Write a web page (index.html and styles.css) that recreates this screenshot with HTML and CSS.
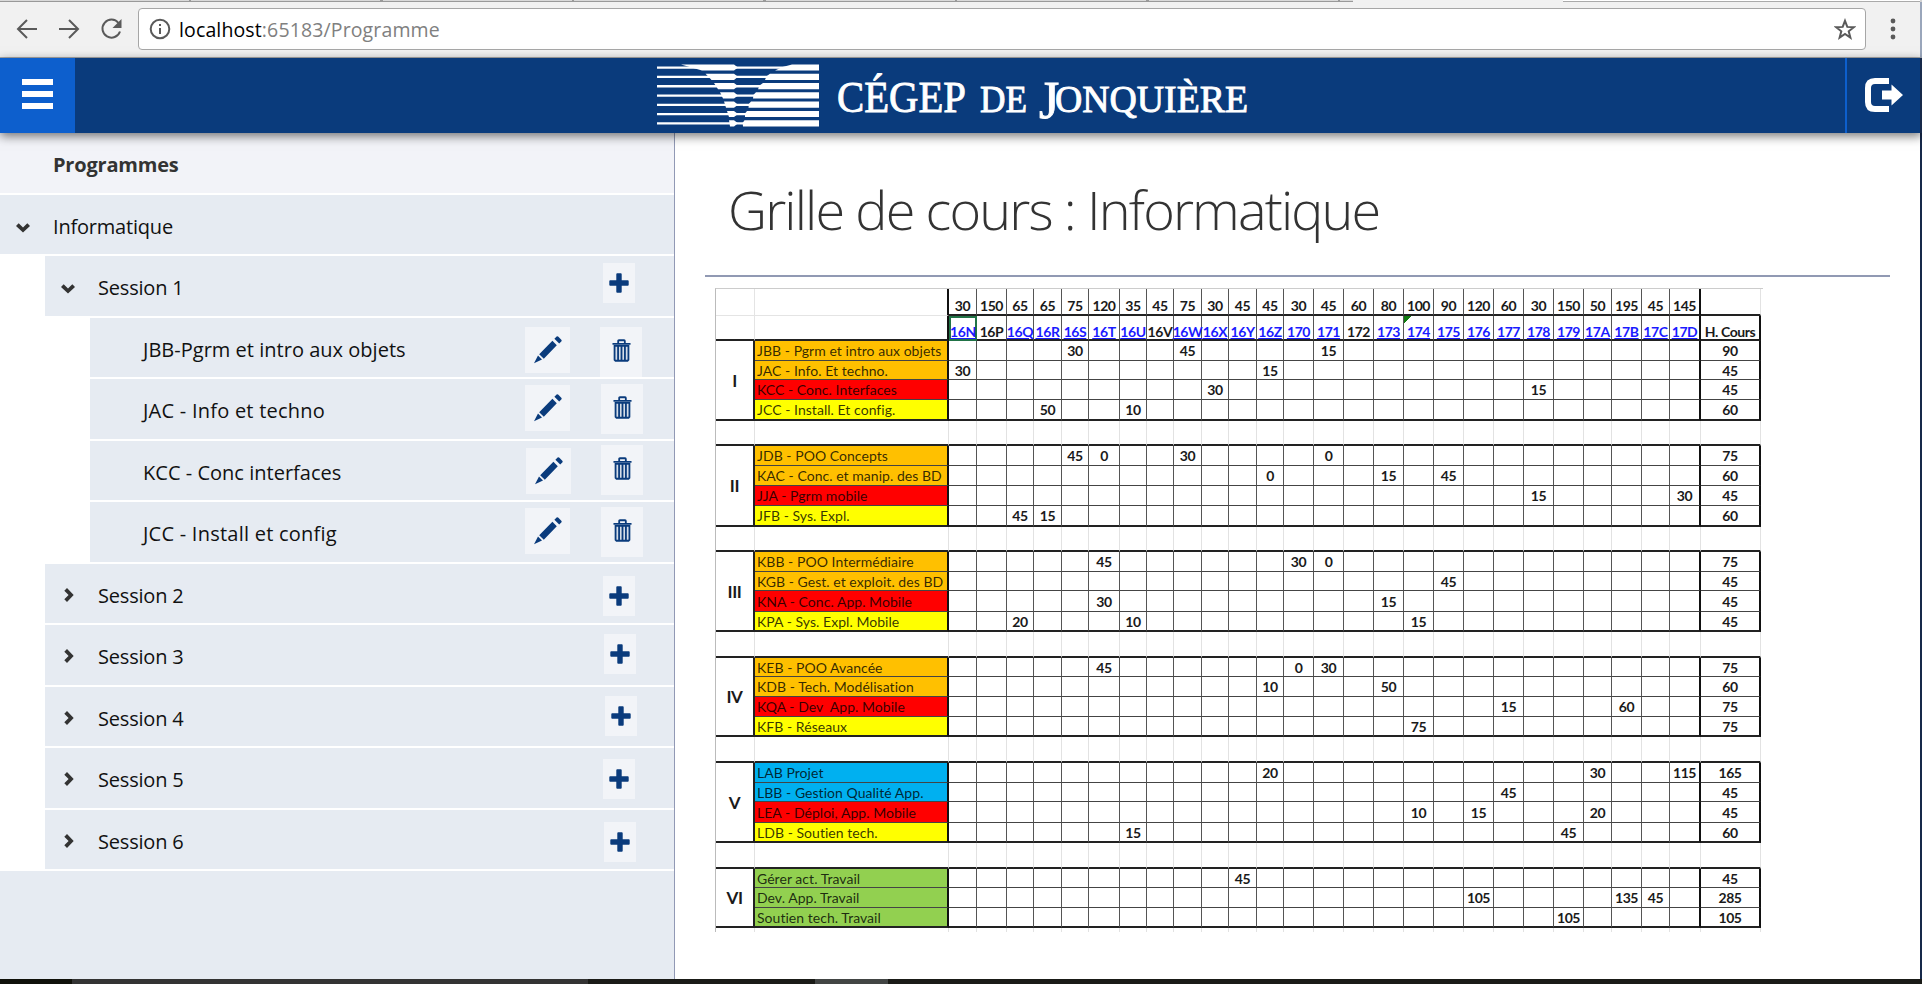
FILE: index.html
```html
<!DOCTYPE html>
<html lang="fr">
<head>
<meta charset="utf-8">
<title>Programme</title>
<link rel="stylesheet" href="styles.css">
</head>
<body>
<svg class="defs" width="0" height="0">
  <symbol id="down" viewBox="0 0 14 10"><path d="M0 3L2.7.3 7 4.4 11.3.3 14 3 7 9.5z"/></symbol>
  <symbol id="right" viewBox="0 0 10 14"><path d="M3 0L.3 2.7 4.6 7 .3 11.3 3 14 9.7 7z"/></symbol>
  <symbol id="plus" viewBox="0 0 20 20"><path d="M7.3 1.2q0-.9.9-.9h3.6q.9 0 .9.9v6.1h6.1q.9 0 .9.9v3.6q0 .9-.9.9h-6.1v6.1q0 .9-.9.9H8.2q-.9 0-.9-.9v-6.1H1.2q-.9 0-.9-.9V8.2q0-.9.9-.9h6.1z"/></symbol>
  <symbol id="pencil" viewBox="0 0 28 28"><path d="M18.4 4.800L22.800 9.200 9.800 22.800 5.200 18.200zM22.600.6q.9-.8 1.800.1l2.900 3q.8.9 0 1.700L25.200 7.500 20.400 2.700zM4 19.600L8 23.600 0 27.200z"/></symbol>
  <symbol id="trash" viewBox="0 0 20 24"><path d="M.5 5h19M6.500 4.500V2q0-.8.8-.8h5.400q.8 0 .8.8v2.500" fill="none" stroke="currentColor" stroke-width="1.900"/><path d="M2.700 7.200v14.600l1 1h12.600l1-1V7.200zM6.400 7.200v15M10 7.200v15M13.600 7.200v15" fill="currentColor" fill-opacity=".12" stroke="currentColor" stroke-width="1.900"/></symbol>
</svg>
<div class="tabs"><i class="t1"></i><i class="t2"></i><i class="t3"></i></div>
<div class="toolbar">
  <svg class="nav" width="138" height="40" viewBox="0 0 138 40" fill="none" stroke="#5a5a5a" stroke-width="2"><path d="M37 21H18M27 12l-9 9 9 9M59 21h19M69 12l9 9-9 9M118.500 15a9 9 0 1 0 1.500 8.500"/><path d="M121.500 11v9h-9z" fill="#5a5a5a" stroke="none"/></svg>
  <div class="address">
    <svg width="22" height="22" viewBox="0 0 22 22" fill="none" stroke="#5a5a5a" stroke-width="2"><circle cx="11" cy="11" r="9.300"/><path d="M11 10v6M11 6v2"/></svg>
    <span class="url"><b>localhost</b>:65183/Programme</span>
    <svg class="star" width="22" height="22" viewBox="0 0 22 22" fill="none" stroke="#5a5a5a" stroke-width="2"><path d="M11 2.800l2.300 6.100 6.500.3-5.100 4.100 1.700 6.300-5.400-3.600-5.400 3.600 1.700-6.300L2.200 9.200l6.500-.3z"/></svg>
  </div>
  <svg class="dots" width="6" height="22" viewBox="0 0 6 22" fill="#5a5a5a"><circle cx="3" cy="3" r="2.400"/><circle cx="3" cy="11" r="2.400"/><circle cx="3" cy="19" r="2.400"/></svg>
</div>
<header class="bar">
  <div class="burger"><i></i><i></i><i></i></div>
  <svg class="logo" width="600" height="75" viewBox="0 0 600 75" fill="#fff">
    <g id="stripes"></g>
    <g class="brand">
      <text class="cap" x="180" y="53.500" textLength="129" lengthAdjust="spacingAndGlyphs">CÉGEP</text>
      <text x="323" y="53.500" textLength="47" lengthAdjust="spacingAndGlyphs">DE</text>
      <text class="jay" x="382" y="60">J</text>
      <text x="398" y="53.500" textLength="193" lengthAdjust="spacingAndGlyphs">ONQUIÈRE</text>
    </g>
  </svg>
  <div class="logout"><svg width="40" height="34" viewBox="0 0 40 34"><path d="M25 3H11Q4 3 4 10v14q0 7 7 7h14" fill="none" stroke="#fff" stroke-width="6"/><path d="M18 12.500h9.500V6.500L39 17 27.500 27.500v-6H18z" fill="#fff"/></svg></div>
</header>
<main class="page">
  <aside class="side">
    <div class="row head"><span>Programmes</span></div>
    <div class="row"><svg class="chev"><use href="#down"/></svg><span>Informatique</span></div>
    <div class="row l1"><svg class="chev"><use href="#down"/></svg><span>Session 1</span><div class="acts x0"><a class="add m7"><svg><use href="#plus"/></svg></a></div></div>
    <div class="row l2"><span>JBB-Pgrm et intro aux objets</span><div class="acts"><a class="edit m9"><svg><use href="#pencil"/></svg></a><a class="del m9 gap30"><svg><use href="#trash"/></svg></a></div></div>
    <div class="row l2"><span class="wide">JAC - Info et techno</span><div class="acts x1"><a class="edit m6"><svg><use href="#pencil"/></svg></a><a class="del m5 gap31"><svg><use href="#trash"/></svg></a></div></div>
    <div class="row l2"><span>KCC - Conc interfaces</span><div class="acts x1"><a class="edit m7"><svg><use href="#pencil"/></svg></a><a class="del m4 gap30"><svg><use href="#trash"/></svg></a></div></div>
    <div class="row l2"><span class="wide">JCC - Install et config</span><div class="acts x1"><a class="edit m6"><svg><use href="#pencil"/></svg></a><a class="del m5 gap31"><svg><use href="#trash"/></svg></a></div></div>
    <div class="row l1"><svg class="chev r"><use href="#right"/></svg><span>Session 2</span><div class="acts x0"><a class="add m12"><svg><use href="#plus"/></svg></a></div></div>
    <div class="row l1"><svg class="chev r"><use href="#right"/></svg><span>Session 3</span><div class="acts x1"><a class="add m9"><svg><use href="#plus"/></svg></a></div></div>
    <div class="row l1"><svg class="chev r"><use href="#right"/></svg><span>Session 4</span><div class="acts x2"><a class="add m9"><svg><use href="#plus"/></svg></a></div></div>
    <div class="row l1"><svg class="chev r"><use href="#right"/></svg><span>Session 5</span><div class="acts x0"><a class="add m11"><svg><use href="#plus"/></svg></a></div></div>
    <div class="row l1"><svg class="chev r"><use href="#right"/></svg><span>Session 6</span><div class="acts x1"><a class="add m12"><svg><use href="#plus"/></svg></a></div></div>
    <div class="rest"></div>
  </aside>
  <section class="content">
    <h1>Grille de cours : Informatique</h1>
    <div class="grid" id="grid"></div>
  </section>
  <div class="edge"></div>
</main>
<footer class="taskbar"><i></i><i></i><i></i><i></i></footer>
<script src="grid.js"></script>
</body>
</html>
```
FILE: styles.css
```css
* { box-sizing: border-box; }
body { margin: 0; width: 1922px; height: 984px; overflow: hidden; display: flex; flex-direction: column; background: #fff; font-family: "Open Sans", "Noto Sans", sans-serif; color: #111; }
.defs { position: absolute; }
.tabs { height: 2px; flex: none; display: flex; background: #d4d4d4; }
.tabs i { height: 2px; border-bottom: 1px solid #999; }
.tabs .t1 { width: 1353px; background: repeating-linear-gradient(90deg, #d9d9d9 0 189px, #999 189px 191.5px); }
.tabs .t2 { width: 210px; background: #f1f1f1; border-color: #f1f1f1; }
.tabs .t3 { width: 357px; background: #fff; border-color: #aaa; }
.toolbar { height: 56px; flex: none; display: flex; align-items: flex-start; background: #f1f1f1; border-bottom: 1px solid #aaa; border-right: 2px solid #9aa6bb; }
.nav { margin-top: 6px; flex: none; }
.address { margin-top: 6px; width: 1728px; height: 42px; display: flex; align-items: center; background: #fff; border: 1px solid #a6a6a6; border-radius: 4px; padding: 0 9px 0 10px; }
.url { margin-left: 8px; font-size: 19.5px; color: #808080; letter-spacing: .13px; }
.url b { font-weight: 400; color: #000; }
.star { margin-left: auto; }
.dots { margin: 16px 0 0 24px; }
.bar { height: 75px; flex: none; display: flex; background: #0a3b7c; box-shadow: 0 3px 10px rgba(0,0,0,.55); border-right: 2px solid #16294a; z-index: 1; }
.burger { width: 75px; background: #0d5fcd; display: flex; flex-direction: column; gap: 6px; padding: 21px 22px; }
.burger i { height: 6px; background: #fff; }
.logo { margin-left: 582px; }
.brand { font: 400 38px "Liberation Serif", serif; stroke: #fff; stroke-width: .9px; }
.brand .cap { font-size: 45px; }
.brand .jay { font-size: 52px; }
.logout { margin-left: auto; width: 75px; border-left: 2px solid #0d5fcd; padding: 20px 0 0 17px; }
.page { flex: 1; min-height: 0; display: flex; }
.side { width: 675px; flex: none; border-right: 1px solid #9199b5; display: flex; flex-direction: column; }
.row { height: 59.5px; margin-bottom: 2px; flex: none; background: #e6ebf2; display: flex; padding-left: 16px; }
.row.head { height: 59.9px; background: #f2f3f8; font-weight: 700; color: #333; padding-left: 53px; }
.row span { font-size: 20px; line-height: 28px; padding-top: 18px; letter-spacing: -.2px; white-space: nowrap; }
.row.head span { font-size: 20px; padding-top: 18px; }
.row.l2 span { letter-spacing: .02px; }
.row.l2 .wide { letter-spacing: .24px; }
.l1 { margin-left: 45px; }
.l2 { margin-left: 90px; padding-left: 53px; }
.chev { width: 14px; height: 10px; margin: 28px 23px 0 0; fill: #333; flex: none; }
.chev.r { width: 10px; height: 14px; margin: 24px 24px 0 3px; }
.acts { margin-left: auto; display: flex; align-items: flex-start; padding-right: 39px; }
.l2 .acts { padding-right: 32px; }
.l2 .x1 { padding-right: 31px; }
.l1 .x1 { padding-right: 38px; }
.l1 .x2 { padding-right: 37px; }
.acts a { background: #f2f4f8; color: #0a3b7c; display: flex; align-items: center; justify-content: center; }
.acts svg { fill: currentColor; }
.add { width: 32px; height: 40px; }
.add svg { width: 20px; height: 20px; }
.edit { width: 45px; height: 46px; }
.edit svg { width: 28px; height: 28px; }
.del { width: 42px; height: 50px; }
.del svg { width: 19px; height: 23px; margin-top: -3px; }
.gap30 { margin-left: 30px; }
.gap31 { margin-left: 31px; }
.m4 { margin-top: 4px; } .m5 { margin-top: 5px; } .m6 { margin-top: 6px; } .m7 { margin-top: 7px; } .m9 { margin-top: 9px; } .m11 { margin-top: 11px; } .m12 { margin-top: 12px; }
.rest { flex: 1; background: #e6ebf2; }
.content { flex: 1; padding: 0 30px; }
h1 { margin: 0 0 11px; height: 144px; border-bottom: 2px solid #9199b3; padding: 39px 0 0 23px; font-size: 54px; line-height: 74px; font-weight: 300; color: #333; letter-spacing: -1.86px; white-space: nowrap; }
.edge { width: 2px; background: #16294a; }
.taskbar { height: 5px; flex: none; display: flex; background: #1a1b17; }
.taskbar i:nth-child(1) { width: 72px; background: #10110a; }
.taskbar i:nth-child(2) { width: 516px; background: #333; }
.taskbar i:nth-child(3) { width: 227px; }
.taskbar i:nth-child(4) { width: 73px; background: #424544; }
.grid { display: grid; margin-left: 10px; width: 1048px; font: 700 14px Lato, sans-serif; color: #1a1a1a; border-left: 1px solid #bbb; border-top: 1px solid #ccc; }
.grid div { border-right: 1px solid #555; border-bottom: 1px solid #444; display: flex; align-items: center; justify-content: center; white-space: nowrap; letter-spacing: -.4px; min-width: 0; }
.grid .top { padding-top: 7px; border-bottom: 2px solid #222; }
.grid .code { padding-top: 8px; border-bottom: 2px solid #222; }
.grid .link { color: #1a1aff; text-decoration: underline; }
.grid .none { border-color: #e4e4e4; border-bottom: 1px solid #e4e4e4; }
.grid .space { border-color: #e2e2e2; border-bottom: 2px solid #222; }
.grid .final { border-color: #e2e2e2; border-bottom: 0; }
.grid .last { border-bottom: 2px solid #222; }
.grid .heavy { border-right: 2px solid #111; }
.grid .name { justify-content: flex-start; padding-left: 2px; font-weight: 400; font-size: 14px; color: rgba(0,0,0,.8); letter-spacing: .04px; }
.grid .num { font-size: 17px; border-right: 2px solid #222; border-bottom: 2px solid #222; }
.grid .sel { border: 2px solid #217346; padding-top: 6px; }
.grid .flag { background: linear-gradient(135deg, #107c10 5px, transparent 5px); }
.grid .o { background: #ffc000; } .grid .r { background: #f00; } .grid .y { background: #ff0; } .grid .b { background: #00b0f0; } .grid .g { background: #92d050; }
```
FILE: grid.js
```js
// Column and row boundaries of the course grid
const X = [716,755,949,977,1007,1034,1062,1089,1120,1147,1174,1202,1229,1257,1284,1314,1344,1374,1404,1434,1464,1494,1524,1554,1584,1612,1642,1670,1701,1761,1764];
const Y = [289,316,341,361,380,400,421,446,466,486,506,527,552,572,591,612,632,658,677,697,717,737,763,783,802,823,843,869,888,908,928,932];
const sizes = a => a.slice(1).map((v, i) => v - a[i] + 'px').join(' ');
const hours = [30,150,65,65,75,120,35,45,75,30,45,45,30,45,60,80,100,90,120,60,30,150,50,195,45,145];
const codes = '16N 16P 16Q 16R 16S 16T 16U 16V 16W 16X 16Y 16Z 170 171 172 173 174 175 176 177 178 179 17A 17B 17C 17D'.split(' ');
const plain = ['16P', '16V', '172'];
const sessions = [
  ['I', [['o','JBB - Pgrm et intro aux objets',{'16S':30,'16W':45,'171':15},90],['o','JAC - Info. Et techno.',{'16N':30,'16Z':15},45],['r','KCC - Conc. Interfaces',{'16X':30,'178':15},45],['y','JCC - Install. Et config.',{'16R':50,'16U':10},60]]],
  ['II', [['o','JDB - POO Concepts',{'16S':45,'16T':0,'16W':30,'171':0},75],['o','KAC - Conc. et manip. des BD',{'16Z':0,'173':15,'175':45},60],['r','JJA - Pgrm mobile',{'178':15,'17D':30},45],['y','JFB - Sys. Expl.',{'16Q':45,'16R':15},60]]],
  ['III', [['o','KBB - POO Intermédiaire',{'16T':45,'170':30,'171':0},75],['o','KGB - Gest. et exploit. des BD',{'175':45},45],['r','KNA - Conc. App. Mobile',{'16T':30,'173':15},45],['y','KPA - Sys. Expl. Mobile',{'16Q':20,'16U':10,'174':15},45]]],
  ['IV', [['o','KEB - POO Avancée',{'16T':45,'170':0,'171':30},75],['o','KDB - Tech. Modélisation',{'16Z':10,'173':50},60],['r','KQA - Dev  App. Mobile',{'177':15,'17B':60},75],['y','KFB - Réseaux',{'174':75},75]]],
  ['V', [['b','LAB Projet',{'16Z':20,'17A':30,'17D':115},165],['b','LBB - Gestion Qualité App.',{'177':45},45],['r','LEA - Déploi, App. Mobile',{'174':10,'176':15,'17A':20},45],['y','LDB - Soutien tech.',{'16U':15,'179':45},60]]],
  ['VI', [['g','Gérer act. Travail',{'16Y':45},45],['g','Dev. App. Travail',{'176':105,'17B':135,'17C':45},285],['g','Soutien tech. Travail',{'179':105},105]]]
];
const grid = document.getElementById('grid');
grid.style.gridTemplateColumns = sizes(X);
grid.style.gridTemplateRows = sizes(Y);
function cell(r, c, cls, text, span) {
  const d = document.createElement('div');
  d.className = cls;
  d.style.gridArea = r + '/' + c + (span ? '/span ' + span : '');
  if (text !== undefined) {
    const s = document.createElement('span');
    s.style.whiteSpace = 'pre';
    s.textContent = text;
    d.append(s);
  }
  grid.append(d);
}
cell(1, 1, 'none'); cell(1, 2, 'none heavy');
hours.forEach((h, i) => cell(1, i + 3, 'top' + (i === 25 ? ' heavy' : ''), h));
cell(1, 29, 'space');
cell(2, 1, 'code none last'); cell(2, 2, 'code heavy');
codes.forEach((k, i) => cell(2, i + 3, 'code' + (plain.includes(k) ? '' : ' link') + (i === 0 ? ' sel' : '') + (k === '174' ? ' flag' : '') + (i === 25 ? ' heavy' : ''), k));
cell(2, 29, 'code heavy', 'H. Cours');
let row = 3;
sessions.forEach(([name, courses]) => {
  cell(row, 1, 'num', name, courses.length);
  courses.forEach(([color, label, values, total], i) => {
    const last = i === courses.length - 1 ? ' last' : '';
    cell(row, 2, 'name heavy ' + color + last, label);
    codes.forEach((k, j) => cell(row, j + 3, (j === 25 ? 'heavy' : '') + last, values[k]));
    cell(row, 29, 'heavy' + last, total);
    row++;
  });
  for (let c = 1; c < 30; c++) cell(row, c, name === 'VI' ? 'final' : 'space');
  row++;
});

// Striped emblem: each stripe is a thin line, a slice of the funnel and a solid bar
const funnelTop = [24, 48.5, 57, 63, 67, 70, 72], funnelBottom = [45, 54.5, 61, 66, 69, 72, 73];
const barTop = [135, 113, 106, 99, 94, 90, 87.5], barBottom = [118, 108, 101, 96, 91.5, 88, 86];
let shapes = '';
for (let i = 0; i < 7; i++) {
  const y = 6.4 + i * 9.3, b = y + 6.2;
  shapes += `<path d="M0 ${y + 2.1}H${barTop[i] + 2}V${y + 4.4}H0z"/>`
    + `<path d="M${funnelTop[i]} ${y}H77L81 ${y + 3.1}L77 ${b}H${funnelBottom[i]}L${(funnelTop[i] + funnelBottom[i]) / 2} ${y + 3}z"/>`
    + `<path d="M${barTop[i]} ${y}H162V${b}H${barBottom[i]}L${(barTop[i] + barBottom[i]) / 2 - 1} ${y + 2.5}z"/>`;
}
document.getElementById('stripes').innerHTML = shapes;
```
